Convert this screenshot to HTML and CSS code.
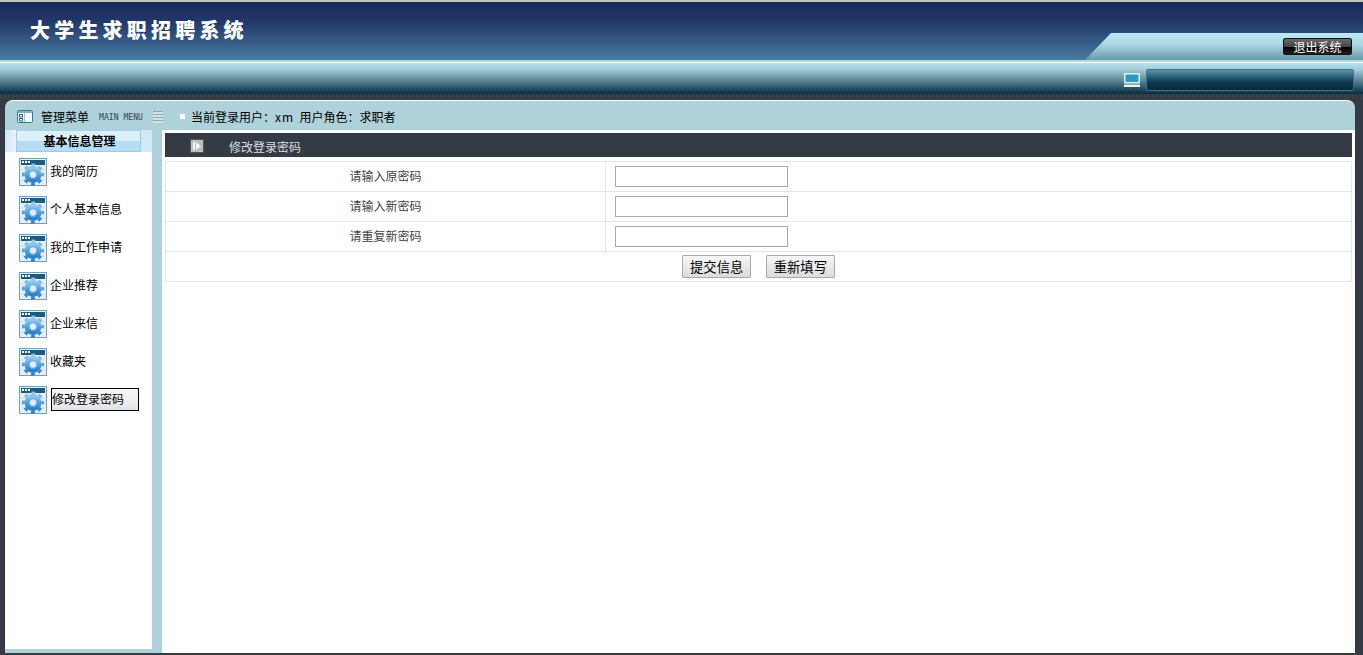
FILE: index.html
```html
<!DOCTYPE html>
<html lang="zh-CN">

<head>
    <meta charset="UTF-8">
    <title>大学生求职招聘系统</title>
    <link rel="stylesheet" href="styles.css">
</head>

<body>

    <!-- 隐藏的图标定义 -->
    <svg class="defs" width="0" height="0">
        <defs>
            <linearGradient id="gear-fill" x1="0" y1="0" x2="0" y2="1">
                <stop offset="0" stop-color="#8fc6ee" />
                <stop offset="0.55" stop-color="#4f9fe0" />
                <stop offset="1" stop-color="#2a80cc" />
            </linearGradient>
        </defs>
        <symbol id="gear-icon" viewBox="0 0 28 28">
            <rect x="0.5" y="0.5" width="27" height="27" fill="#e6eff4" stroke="#739fb8" />
            <rect x="2" y="2" width="24" height="5" fill="#1d5a80" />
            <rect x="3" y="3" width="2" height="2" fill="#fff" />
            <rect x="6" y="3" width="2" height="2" fill="#fff" />
            <rect x="9" y="3" width="2" height="2" fill="#fff" />
            <path d="M2 12h24M2 17h24M2 22h24M8 8v18M20 8v18" stroke="#cfdde6" stroke-width="1" />
            <circle cx="14" cy="16.5" r="9.6" fill="none" stroke="url(#gear-fill)" stroke-width="2.8" stroke-dasharray="3.8 3.74" stroke-dashoffset="1.9" />
            <circle cx="14" cy="16.5" r="6.2" fill="none" stroke="url(#gear-fill)" stroke-width="4.6" />
            <circle cx="14" cy="16.5" r="3.9" fill="#dcedf9" stroke="#3a8ed4" stroke-width="0.8" />
        </symbol>
    </svg>

    <!-- 顶部 -->
    <header class="header">
        <h1 class="logo">大学生求职招聘系统</h1>
        <div class="logout-wedge">
            <a class="logout-btn">退出系统</a>
        </div>
    </header>

    <div class="toolbar">
        <svg width="16" height="14" viewBox="0 0 16 14">
            <rect x="0" y="0" width="16" height="10.5" rx="1" fill="#e4f2ea" />
            <rect x="1.5" y="1.5" width="13" height="7.5" fill="#2a9cc4" />
            <rect x="0" y="11.5" width="16" height="2.5" fill="#e4f2ea" />
        </svg>
        <div class="toolbar-box"></div>
    </div>

    <div class="stripe"></div>

    <!-- 主面板 -->
    <div class="panel">
        <div class="panel-head">
            <div class="menu-head">
                <svg width="16" height="13" viewBox="0 0 16 13">
                    <rect x="0.5" y="0.5" width="15" height="12" rx="1" fill="#f4f8f9" stroke="#3b7896" />
                    <rect x="1" y="1" width="14" height="2" fill="#7fb0c6" />
                    <rect x="2.5" y="4.5" width="3" height="2.5" fill="#fff" stroke="#2f6f8f" />
                    <rect x="2.5" y="8.5" width="3" height="2.5" fill="#fff" stroke="#2f6f8f" />
                    <rect x="7" y="3" width="1" height="9" fill="#9fc3d2" />
                </svg>
                <span class="menu-title">管理菜单</span>
                <span class="menu-sub">MAIN MENU</span>
                <span class="menu-lines"></span>
            </div>
            <div class="user-info">
                <span class="user-dot"></span>
                <span>当前登录用户：<span class="user-name">xm</span>&nbsp;&nbsp;用户角色：求职者</span>
            </div>
        </div>

        <div class="panel-body">
            <aside class="sidebar">
                <div class="side-title-wrap">
                    <div class="side-title">基本信息管理</div>
                </div>
                <ul class="side-menu">
                    <li><svg class="gear"><use href="#gear-icon" /></svg><a>我的简历</a></li>
                    <li><svg class="gear"><use href="#gear-icon" /></svg><a>个人基本信息</a></li>
                    <li><svg class="gear"><use href="#gear-icon" /></svg><a>我的工作申请</a></li>
                    <li><svg class="gear"><use href="#gear-icon" /></svg><a>企业推荐</a></li>
                    <li><svg class="gear"><use href="#gear-icon" /></svg><a>企业来信</a></li>
                    <li><svg class="gear"><use href="#gear-icon" /></svg><a>收藏夹</a></li>
                    <li><svg class="gear"><use href="#gear-icon" /></svg><a class="active">修改登录密码</a></li>
                </ul>
            </aside>

            <main class="content">
                <div class="content-title">
                    <svg class="play" width="14" height="14" viewBox="0 0 14 14">
                        <rect x="0" y="0" width="14" height="14" fill="#555" />
                        <rect x="1" y="1" width="12" height="12" fill="#bdbdbd" />
                        <rect x="3" y="3" width="2" height="8" fill="#f2f2f2" />
                        <path d="M6 3l5 4-5 4z" fill="#f2f2f2" />
                    </svg>
                    <span>修改登录密码</span>
                </div>
                <table class="form-table">
                    <tr>
                        <td class="label">请输入原密码</td>
                        <td><input type="password"></td>
                    </tr>
                    <tr>
                        <td class="label">请输入新密码</td>
                        <td><input type="password"></td>
                    </tr>
                    <tr>
                        <td class="label">请重复新密码</td>
                        <td><input type="password"></td>
                    </tr>
                    <tr>
                        <td class="actions" colspan="2">
                            <button type="button">提交信息</button>
                            <button type="button">重新填写</button>
                        </td>
                    </tr>
                </table>
            </main>
        </div>
    </div>

</body>

</html>
```

FILE: styles.css
```css
/* 基本样式 */
html,
body {
    margin: 0;
    padding: 0;
    height: 100%;
    overflow: hidden;
}

body {
    display: flex;
    flex-direction: column;
    background: #343b44;
    font-family: "Noto Sans CJK SC", "Liberation Sans", sans-serif;
    font-size: 12px;
    color: #000;
}

.defs {
    position: absolute;
}

/* 顶部 */
.header {
    height: 58px;
    flex: none;
    display: flex;
    justify-content: space-between;
    border-top: 2px solid #c4c4c4;
    border-bottom: 2px solid #a9dbe6;
    background: linear-gradient(#182858 0%, #22396a 35%, #4a7ba2 100%);
}

.logo {
    margin: 13px 0 0 30px;
    font-family: "Noto Sans CJK SC", sans-serif;
    font-size: 20px;
    line-height: 29px;
    font-weight: 900;
    letter-spacing: 4.2px;
    color: #fff;
}

.logout-wedge {
    width: 278px;
    height: 27px;
    align-self: flex-end;
    display: flex;
    justify-content: flex-end;
    align-items: flex-start;
    box-sizing: border-box;
    padding: 5px 11px 0 0;
    background: linear-gradient(#bdebf5 0%, #a8d6e2 45%, #6a98aa 100%);
    clip-path: polygon(26px 0, 100% 0, 100% 100%, 0 100%);
}

.logout-btn {
    width: 69px;
    height: 17px;
    box-sizing: border-box;
    border: 1px solid #111;
    border-radius: 2px;
    background: linear-gradient(#6a6a6a 0%, #444 50%, #000 55%, #222 100%);
    color: #fff;
    text-align: center;
    line-height: 15px;
}

.toolbar {
    height: 32px;
    flex: none;
    display: flex;
    justify-content: flex-end;
    align-items: center;
    gap: 6px;
    padding: 3px 9px 0 0;
    border-top: 1px solid #fff;
    box-sizing: border-box;
    background: linear-gradient(#b5e3ee 0%, #a3cdd8 20%, #5f8a99 55%, #214a5e 85%, #0c2c3e 100%);
}

.toolbar-box {
    width: 208px;
    height: 22px;
    box-sizing: border-box;
    border: 1px solid #3f7385;
    border-radius: 2px;
    background: linear-gradient(#5d93ad 0%, #2a5d78 35%, #0e3a52 60%, #08283a 100%);
}

.stripe {
    height: 6px;
    flex: none;
    background: repeating-linear-gradient(90deg, #3c4650 0, #3c4650 1px, #2c333b 1px, #2c333b 2px);
}

/* 主面板 */
.panel {
    flex: 1;
    min-height: 0;
    margin: 0 8px 2px 5px;
    display: flex;
    flex-direction: column;
    border-top: 1px solid #fff;
    border-radius: 8px 8px 0 0;
    background: #aed1da;
    overflow: hidden;
}

.panel-head {
    height: 29px;
    flex: none;
    box-sizing: border-box;
    padding-top: 2px;
    display: flex;
    align-items: center;
    white-space: nowrap;
}

.menu-head {
    width: 158px;
    flex: none;
    box-sizing: border-box;
    padding-left: 12px;
    display: flex;
    align-items: center;
}

.menu-head svg,
.menu-title,
.menu-sub,
.menu-lines {
    flex: none;
}

.menu-title {
    margin-left: 8px;
}

.menu-sub {
    margin-left: 10px;
    font-family: "DejaVu Sans Mono", monospace;
    font-size: 8.1px;
    color: #2d4652;
}

.menu-lines {
    width: 10px;
    height: 12px;
    margin-left: 10px;
    background: repeating-linear-gradient(#8fa9b2 0, #8fa9b2 1px, #cfe2e7 1px, #cfe2e7 3px);
}

.user-info {
    display: flex;
    align-items: center;
    margin-left: 17px;
    gap: 6px;
}

.user-dot {
    width: 5px;
    height: 5px;
    background: #fff;
}

.user-name {
    letter-spacing: 1px;
}

.panel-body {
    flex: 1;
    min-height: 0;
    display: flex;
}

/* 左侧菜单 */
.sidebar {
    width: 147px;
    flex: none;
    margin: 0 10px 4px 0;
    background: #fff;
}

.side-title-wrap {
    height: 22px;
    padding: 0 11px;
    background: linear-gradient(90deg, #cfe8f6, #f0f8fc 10%, #cfe8f6 100%);
}

.side-title {
    height: 22px;
    box-sizing: border-box;
    padding-left: 2px;
    border: 1px solid #9ccce6;
    border-top-color: #a8d2ea;
    background: linear-gradient(#dcf1fc 0%, #dcf1fc 50%, #b5ddf6 50%, #b5ddf6 100%);
    text-align: center;
    font-weight: bold;
    line-height: 20px;
}

.side-menu {
    list-style: none;
    margin: 6px 0 0;
    padding: 0 0 0 14px;
}

.side-menu li {
    height: 28px;
    margin-bottom: 10px;
    display: flex;
    align-items: center;
    gap: 3px;
}

.gear {
    width: 28px;
    height: 28px;
    flex: none;
}

.side-menu a {
    margin-top: -4px;
}

.side-menu a.active {
    width: 88px;
    height: 23px;
    box-sizing: border-box;
    margin: -1px 0 0 1px;
    border: 1px solid #000;
    background: linear-gradient(#f6f7f8 0%, #eef0f2 50%, #dfe3e6 100%);
    line-height: 20px;
}

/* 右侧内容 */
.content {
    flex: 1;
    min-width: 0;
    padding: 3px;
    background: #fff;
}

.content-title {
    height: 24px;
    box-sizing: border-box;
    padding-top: 2px;
    display: flex;
    align-items: center;
    background: #343b44;
    color: #d8dee2;
}

.play {
    margin-left: 25px;
}

.content-title span {
    margin-left: 25px;
}

.form-table {
    width: 100%;
    margin-top: 4px;
    border-collapse: collapse;
    color: #444;
}

.form-table td {
    height: 29px;
    padding: 0;
    border: 1px solid #e1e7e6;
}

.form-table .label {
    width: 439px;
    height: 27px;
    padding-bottom: 2px;
    text-align: center;
}

.form-table td input {
    display: block;
    width: 173px;
    height: 21px;
    box-sizing: border-box;
    margin-left: 9px;
    border: 1px solid #a9a9a9;
}

.actions {
    text-align: center;
}

.actions button {
    width: 69px;
    height: 23px;
    box-sizing: border-box;
    padding: 0;
    margin: 0 6px;
    border: 1px solid #a9a9a9;
    border-radius: 1px;
    background: linear-gradient(#f6f6f6, #dcdcdc);
    font-family: "Noto Sans CJK SC", sans-serif;
    font-size: 13.33px;
    color: #000;
}
```
